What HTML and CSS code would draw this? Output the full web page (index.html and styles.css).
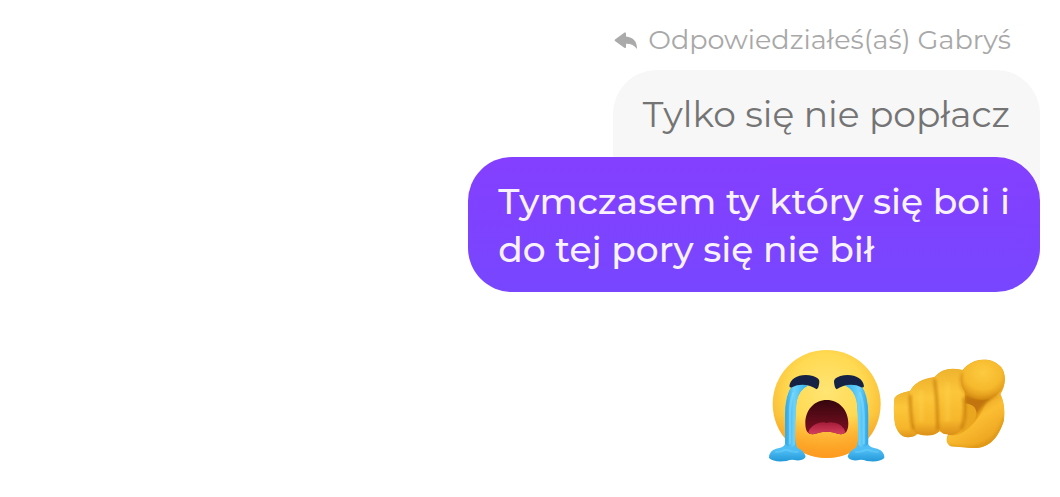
FILE: index.html
```html
<!DOCTYPE html>
<html lang="pl">
<head>
<meta charset="utf-8">
<meta name="viewport" content="width=device-width, initial-scale=1">
<title>Czat</title>
<link rel="stylesheet" href="styles.css">
</head>
<body>
<main class="thread">
  <div class="reply-label">
    <svg class="reply-icon" viewBox="0 0 24 18" aria-hidden="true"><path d="M1 7.6 10.5.6Q12 0 12 1.5V4.5Q23 5.5 23 17Q19 11.5 12 11.8V15Q12 16.8 10.3 15.7L1 9Q0 8.3 1 7.6Z"/></svg>
    <span>Odpowiedziałeś(aś) Gabryś</span>
  </div>
  <div class="quoted">Tylko się nie popłacz</div>
  <div class="message">Tymczasem ty który się boi i<br>do tej pory się nie bił</div>
  <div class="emojis">
    <svg class="crying" viewBox="24 24 351 345" role="img" aria-label="Głośno płacząca buzia">
      <defs>
        <radialGradient id="face" cx=".5" cy=".38" r=".64"><stop offset="0" stop-color="#ffe574"/><stop offset=".55" stop-color="#ffd951"/><stop offset="1" stop-color="#f7b028"/></radialGradient>
        <linearGradient id="chin" x1="0" y1="0" x2="0" y2="1"><stop offset=".6" stop-color="#ff951c" stop-opacity="0"/><stop offset="1" stop-color="#ff961f" stop-opacity=".85"/></linearGradient>
        <linearGradient id="tear"><stop offset="0" stop-color="#2fa6e6"/><stop offset=".4" stop-color="#6cd2fb"/><stop offset="1" stop-color="#2fb2f3"/></linearGradient>
        <linearGradient id="puddle" x1="0" y1="0" x2="0" y2="1"><stop offset="0" stop-color="#35b3f3"/><stop offset=".85" stop-color="#4fbef5"/><stop offset="1" stop-color="#2399d8"/></linearGradient>
        <linearGradient id="mouth" x1="0" y1="0" x2="0" y2="1"><stop offset="0" stop-color="#35060d"/><stop offset="1" stop-color="#800f24"/></linearGradient>
        <linearGradient id="tongue" x1="0" y1="0" x2="0" y2="1"><stop offset="0" stop-color="#a51c3a"/><stop offset="1" stop-color="#e24a66"/></linearGradient>
        <filter id="soften"><feGaussianBlur stdDeviation="2"/></filter>
        <clipPath id="mouthClip"><path d="M200 180C163 180 136 210 136 250C136 275 145 284 159 283C174 279 183 275 200 275C217 275 226 279 241 283C256 284 265 274 265 250C265 210 237 180 200 180Z"/></clipPath>
      </defs>
      <circle cx="200" cy="192" r="162" fill="url(#face)"/>
      <circle cx="200" cy="192" r="162" fill="url(#chin)"/>
      <g id="leftTear">
        <path d="M97 137Q120 127 143 137Q118 148 110 182Q105 213 105 270Q104 310 112 323Q130 330 137 349Q134 363 108 361Q95 357 80 363Q42 368 27 354Q26 333 48 326Q69 324 75 313V225Q75 163 97 137Z" fill="url(#puddle)"/>
        <path d="M96 140Q118 128 143 137Q118 148 110 184Q106 218 105 314Q90 330 76 312V230Q76 169 96 140Z" fill="url(#tear)"/>
        <path d="M100 160Q90 184 89 229V310" fill="none" stroke="#8ae2ff" stroke-width="7" stroke-linecap="round" opacity=".5" filter="url(#soften)"/>
        <path d="M45 337Q65 336 78 328Q95 338 115 335" fill="none" stroke="#75d7fc" stroke-width="6" opacity=".4" filter="url(#soften)"/>
      </g>
      <use href="#leftTear" transform="translate(400 0) scale(-1 1)"/>
      <path d="M88 139C91 111 125 99 159 108Q179 115 178 125Q177 143 170 148C151 134 119 129 96 142Q90 144 88 139Z" fill="#152245"/>
      <path d="M312 139C309 111 275 99 241 108Q221 115 222 125Q223 143 230 148C249 134 281 129 304 142Q310 144 312 139Z" fill="#152245"/>
      <path d="M200 180C163 180 136 210 136 250C136 275 145 284 159 283C174 279 183 275 200 275C217 275 226 279 241 283C256 284 265 274 265 250C265 210 237 180 200 180Z" fill="url(#mouth)"/>
      <path clip-path="url(#mouthClip)" d="M145 276Q154 253 179 248Q192 245 200 249Q208 245 223 248Q248 252 256 276L240 292H158Z" fill="url(#tongue)" filter="url(#soften)"/>
    </svg>
    <svg class="pointing" viewBox="24 36 342 276" role="img" aria-label="Dłoń wskazująca na patrzącego">
      <defs>
        <linearGradient id="skin" x1="0" y1="0" x2="0" y2="1"><stop offset="0" stop-color="#efb32e"/><stop offset=".35" stop-color="#fcc63a"/><stop offset=".78" stop-color="#f6b62b"/><stop offset="1" stop-color="#db8f18"/></linearGradient>
        <radialGradient id="tip" cx=".5" cy=".32" r=".7"><stop offset="0" stop-color="#fdca40"/><stop offset=".6" stop-color="#f6b92d"/><stop offset="1" stop-color="#d88d14"/></radialGradient>
        <linearGradient id="thumb" x1=".2" y1="0" x2=".8" y2="1"><stop offset="0" stop-color="#d78a12"/><stop offset=".5" stop-color="#fbbe33"/><stop offset="1" stop-color="#e89c19"/></linearGradient>
        <filter id="shade" x="-100%" y="-30%" width="300%" height="160%"><feGaussianBlur stdDeviation="4"/></filter>
        <clipPath id="hand"><path d="M233 75C262 37 319 32 349 67C365 88 362 126 346 147Q363 185 356 229C340 279 311 313 261 309L197 304Q178 292 189 268Q174 269 164 259Q141 279 98 267C69 287 40 277 30 237Q23 193 29 158Q39 144 75 138Q94 102 148 96Q177 61 233 75Z"/></clipPath>
      </defs>
      <g clip-path="url(#hand)">
        <path d="M20 30H370V320H20Z" fill="#efa91f"/>
        <path d="M190 270Q224 277 249 248Q286 221 304 170L350 136Q363 196 356 229C340 282 308 316 260 309L196 304Q180 288 190 270Z" fill="url(#thumb)"/>
        <path d="M240 149Q291 168 328 152Q285 186 266 225L245 244Z" fill="#b96c08" opacity=".85" filter="url(#shade)"/>
        <path d="M24 150Q60 128 92 143V281H24Z" fill="url(#skin)"/>
        <path d="M75 140Q90 103 161 96V262Q140 278 98 268Q80 260 79 230Z" fill="url(#skin)"/>
        <path d="M234 175Q274 176 275 207Q270 243 229 264Z" fill="#eaa61f"/>
        <path d="M150 97Q177 62 236 76L239 156V230Q231 271 191 270Q157 267 154 220Z" fill="url(#skin)"/>
        <path d="M76 150Q75 200 84 254M149 103Q158 170 158 255M237 157Q244 217 229 252" fill="none" stroke="#b96d05" stroke-width="8" opacity=".7" filter="url(#shade)"/>
        <path d="M108 135V231M188 113V230" fill="none" stroke="#ffdc5a" stroke-width="17" opacity=".25" filter="url(#shade)"/>
        <path d="M233 76C262 38 318 33 349 67C370 95 360 132 332 152C302 170 263 169 240 142Q218 108 233 76Z" fill="url(#tip)"/>
        <path d="M231 86Q218 127 251 155Q291 176 336 149" fill="none" stroke="#c47908" stroke-width="6" opacity=".5" filter="url(#shade)"/>
        <path d="M190 303Q268 322 317 287Q352 256 358 217" fill="none" stroke="#ce850d" stroke-width="8" opacity=".55" filter="url(#shade)"/>
      </g>
    </svg>
  </div>
</main>
</body>
</html>
```
FILE: styles.css
```css
* { box-sizing: border-box; }
body {
  margin: 0;
  background: #fff;
  font-family: Montserrat, Inter, "Noto Sans", sans-serif;
}
.thread {
  display: flex;
  flex-direction: column;
  align-items: flex-end;
  padding: 20px 20px 32px;
}
.reply-label {
  display: flex;
  align-items: center;
  gap: 10px;
  margin-right: 29px;
  color: #a8a8a8;
  font-size: 27px;
  line-height: 40px;
}
.reply-icon {
  width: 24px;
  height: 18px;
  margin-top: 2px;
  fill: #aaa;
}
.quoted {
  margin-top: 10px;
  padding: 20px 30px 56px;
  border-radius: 44px 44px 0 0;
  background: #f7f7f7;
  color: #747474;
  font-size: 36px;
  line-height: 48px;
}
.message {
  margin-top: -37px;
  padding: 20px 30px 19px;
  border-radius: 44px;
  background: linear-gradient(#843fff, #7846ff);
  color: #f8f2ff;
  font-size: 36px;
  font-weight: 500;
  line-height: 48px;
}
.emojis {
  display: flex;
  align-items: flex-start;
  gap: 8px;
  margin: 56px 33px 0 0;
}
.crying {
  width: 117px;
  height: 115px;
}
.pointing {
  width: 114px;
  height: 92px;
  margin-top: 9px;
}
```
